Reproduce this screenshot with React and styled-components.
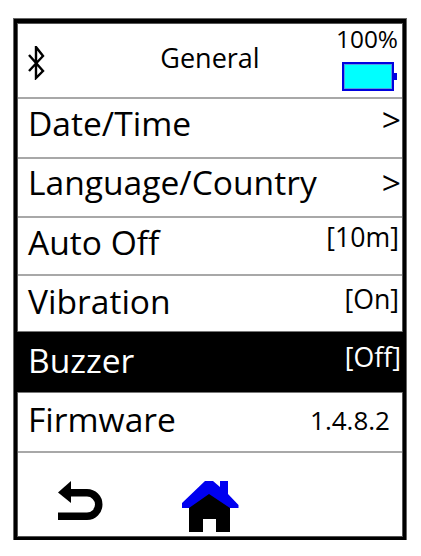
import React from "react";
import styled, { createGlobalStyle } from "styled-components";

const Global = createGlobalStyle`
  html, body { margin: 0; padding: 0; background: #fff; }
  body { font-family: "Open Sans", "Noto Sans", sans-serif; color: #000; }
`;

const Frame = styled.div`
  box-sizing: border-box;
  width: 392px;
  height: 521px;
  margin: 19px 0 0 14px;
  border: 3px solid #000;
  border-top-width: 4px;
  outline: 1px solid #666;
  box-shadow: inset 0 0 0 1px #555;
  padding: 1px;
  display: flex;
  flex-direction: column;
`;

const Header = styled.div`
  box-sizing: border-box;
  height: 75px;
  flex: none;
  border-bottom: 2px solid #a8a8a8;
  display: grid;
  grid-template-columns: 1fr 72px;
  position: relative;
`;

const BtIcon = styled.svg`
  position: absolute;
  left: 10px;
  top: 22px;
`;

const Title = styled.div`
  font-size: 27px;
  line-height: 36px;
  text-align: center;
  padding: 16px 0 0 72px;
`;

const Status = styled.div`
  display: flex;
  flex-direction: column;
  align-items: flex-end;
  padding-right: 4px;
`;

const Percent = styled.div`
  font-size: 24.4px;
  line-height: 30px;
`;

const Battery = styled.svg`
  margin-top: 8px;
  margin-right: 1px;
  display: block;
`;

const Row = styled.div`
  box-sizing: border-box;
  height: ${(p) => p.$h}px;
  flex: none;
  display: flex;
  justify-content: space-between;
  padding: 0 0 0 ${(p) => (p.$active ? 11 : 10)}px;
  margin: 0 ${(p) => (p.$active ? -1 : 0)}px;
  background: ${(p) => (p.$active ? "#000" : "#fff")};
  color: ${(p) => (p.$active ? "#fff" : "#000")};
  border-top: ${(p) => p.$top ?? 0}px solid #777;
  border-bottom: ${(p) => p.$bottom ?? 2}px solid ${(p) => (p.$bottom === 1 ? "#777" : "#a8a8a8")};
`;

const Label = styled.div`
  font-size: 33.6px;
  line-height: 46px;
  padding-top: ${(p) => p.$pt ?? 1}px;
`;

const Chevron = styled.div`
  font-size: 33.6px;
  line-height: 46px;
  margin-top: ${(p) => p.$mt ?? 0}px;
  padding-right: 1px;
`;

const Value = styled.div`
  font-size: ${(p) => p.$size ?? 26.7}px;
  line-height: 34px;
  padding-top: ${(p) => p.$pt ?? 0}px;
  padding-right: ${(p) => p.$pr ?? 3}px;
`;

const Footer = styled.div`
  flex: 1;
  display: flex;
  align-items: flex-start;
  padding: 28px 0 0 40px;
  gap: 78px;
`;

export default function App() {
  return (
    <>
      <Global />
      <Frame>
        <Header>
          <BtIcon width="18" height="34" viewBox="0 0 18 34" fill="none" stroke="#000" strokeWidth="2.4">
            <path d="M1 9 L15 25 L8 32 V1 L15 10 L1 25" />
          </BtIcon>
          <Title>General</Title>
          <Status>
            <Percent>100%</Percent>
            <Battery width="55" height="29" viewBox="0 0 55 29">
              <rect x="1" y="1" width="50" height="27" fill="#00ffff" stroke="#0000e0" strokeWidth="2" />
              <rect x="2.5" y="2.5" width="47" height="24" fill="none" stroke="#4f9fe0" strokeWidth="1" />
              <rect x="51" y="11" width="4" height="7" fill="#0000e0" />
            </Battery>
          </Status>
        </Header>
        <Row $h={60}>
          <Label>Date/Time</Label>
          <Chevron $mt={-3}>&gt;</Chevron>
        </Row>
        <Row $h={59}>
          <Label $pt={0}>Language/Country</Label>
          <Chevron>&gt;</Chevron>
        </Row>
        <Row $h={58}>
          <Label>Auto Off</Label>
          <Value $pt={2}>[10m]</Value>
        </Row>
        <Row $h={56} $bottom={1}>
          <Label $pt={2}>Vibration</Label>
          <Value $pt={6}>[On]</Value>
        </Row>
        <Row $h={60} $active $bottom={0}>
          <Label $pt={5}>Buzzer</Label>
          <Value $pt={8} $pr={2}>[Off]</Value>
        </Row>
        <Row $h={61} $top={1}>
          <Label $pt={3}>Firmware</Label>
          <Value $pt={10} $pr={12} $size={26}>1.4.8.2</Value>
        </Row>
        <Footer>
          <svg width="46" height="40" viewBox="0 0 46 40">
            <path d="M0 11.5 L13 0 V22 Z" fill="#000" />
            <path d="M11 11.8 H29 A11.75 11.75 0 0 1 29 35.3 H0" fill="none" stroke="#000" strokeWidth="7.5" />
          </svg>
          <svg width="57" height="52" viewBox="0 0 57 52">
            <path d="M7 26 L27 10 L48 26 V51 H34 V38 H21 V51 H7 Z" fill="#000" />
            <path d="M0 22 L23 0 H31 L38 6 V0 H46 V13 L56.5 24 V27 H48 L27 13 L7 27 H0 Z" fill="#0000f0" />
          </svg>
        </Footer>
      </Frame>
    </>
  );
}
